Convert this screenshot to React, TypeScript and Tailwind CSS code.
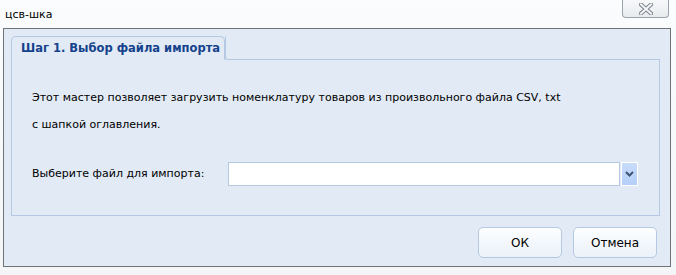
import React from "react";

const font = { fontFamily: '"DejaVu Sans", "Liberation Sans", sans-serif' };

function Chevron() {
  return (
    <svg width="9" height="6" viewBox="0 0 9 6">
      <path d="M1 1 L4.5 4.5 L8 1" stroke="#3d5675" strokeWidth="2" fill="none" />
    </svg>
  );
}

function CloseGlyph() {
  return (
    <svg width="14" height="12" viewBox="0 0 14 12">
      <path d="M2 1.5 L12 10.5 M12 1.5 L2 10.5" stroke="#7b838c" strokeWidth="4" strokeLinecap="square" />
      <path d="M2 1.5 L12 10.5 M12 1.5 L2 10.5" stroke="#f6f7f8" strokeWidth="2" strokeLinecap="square" />
    </svg>
  );
}

export default function App() {
  return (
    <div
      className="relative w-[676px] h-[275px] overflow-hidden bg-gradient-to-b from-[#fbfcfd] to-[#f3f5f7] text-[11px] text-black"
      style={font}
    >
      {/* title bar */}
      <div className="flex h-[28px] items-start justify-between">
        <span className="pl-[5px] pt-[8px] text-[11px] leading-[13px]">цсв-шка</span>
        <button className="mr-[7px] flex h-[18px] w-[47px] items-center justify-center rounded-b-[4px] border border-t-0 border-[#9aa3ad] bg-gradient-to-b from-[#f7f8fa] to-[#e8ebee]">
          <CloseGlyph />
        </button>
      </div>

      {/* window body */}
      <div className="ml-[3px] flex h-[239px] w-[668px] flex-col border border-[#6f7276] bg-[#e1eaf5] pl-[7px] pr-[10px] pt-[7px]">
        {/* tab panel */}
        <div className="flex h-[180px] flex-col">
          <div className="flex h-[24px]">
            <div className="flex w-[214px] items-center whitespace-nowrap rounded-t-[5px] border border-b-0 border-[#b5c9e3] pl-[9px] text-[11.5px] font-bold text-[#15428b]">
              Шаг 1. Выбор файла импорта
            </div>
            <div className="flex-1 rounded-bl-[3px] border-b border-l border-[#b5c9e3]" />
          </div>
          <div className="flex flex-1 flex-col border border-t-0 border-[#b5c9e3] pl-[20px]">
            <div className="mt-[24px] leading-[27px]">
              Этот мастер позволяет загрузить номенклатуру товаров из произвольного файла CSV, txt
            </div>
            <div className="leading-[27px]">с шапкой оглавления.</div>
            <div className="mt-[24px] flex items-center">
              <span className="w-[196px]">Выберите файл для импорта:</span>
              <div className="h-[24px] w-[392px] border border-[#b5c9e3] bg-white" />
              <div className="ml-[1px] flex h-[24px] w-[17px] items-center justify-center border border-white bg-gradient-to-b from-[#c8dcfb] to-[#b5cff8]">
                <Chevron />
              </div>
            </div>
          </div>
        </div>

        {/* buttons */}
        <div className="mt-[11px] flex justify-end gap-[11px] pr-[3px]">
          <button className="h-[31px] w-[84px] rounded-[5px] border border-[#b5c9e3] bg-gradient-to-b from-[#fdfeff] to-[#eaf1f9] text-[12px]">
            ОК
          </button>
          <button className="h-[31px] w-[84px] rounded-[5px] border border-[#b5c9e3] bg-gradient-to-b from-[#fdfeff] to-[#eaf1f9] text-[12px]">
            Отмена
          </button>
        </div>
      </div>
    </div>
  );
}
